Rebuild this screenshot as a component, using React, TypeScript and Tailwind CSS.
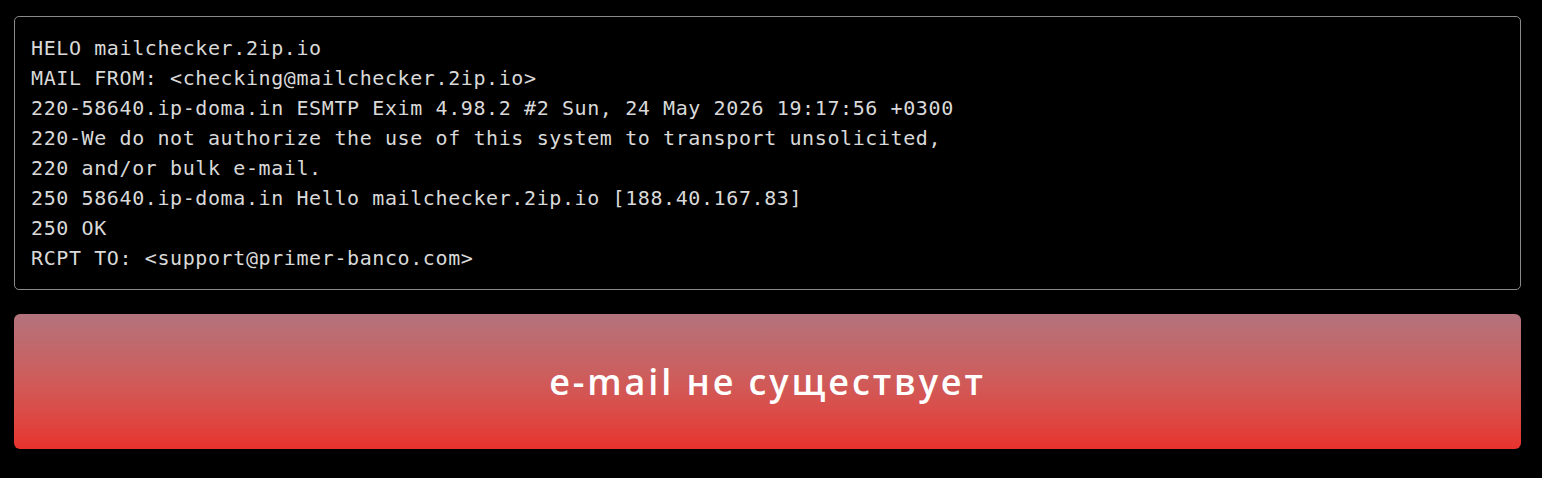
const lines = [
  "HELO mailchecker.2ip.io",
  "MAIL FROM: <checking@mailchecker.2ip.io>",
  "220-58640.ip-doma.in ESMTP Exim 4.98.2 #2 Sun, 24 May 2026 19:17:56 +0300",
  "220-We do not authorize the use of this system to transport unsolicited,",
  "220 and/or bulk e-mail.",
  "250 58640.ip-doma.in Hello mailchecker.2ip.io [188.40.167.83]",
  "250 OK",
  "RCPT TO: <support@primer-banco.com>",
];

export default function App() {
  return (
    <div className="min-h-[478px] w-full bg-black pl-[14px] pr-[21px] pt-4">
      {/* SMTP log */}
      <div className="rounded-[5px] border border-[#8a8a8a] bg-black px-4 py-4">
        {lines.map((line, i) => (
          <div
            key={i}
            className="whitespace-pre text-[20px] leading-[30px] tracking-[0.6px] text-[#d9d9d9]"
            style={{ fontFamily: '"DejaVu Sans Mono", monospace' }}
          >
            {line}
          </div>
        ))}
      </div>

      {/* Result */}
      <div className="mt-[24px] flex h-[135px] items-center justify-center rounded-[6px] bg-gradient-to-b from-[#b3737c] to-[#e8312c]">
        <span
          className="text-[36px] font-semibold tracking-[2.9px] text-white"
          style={{ fontFamily: '"Open Sans", sans-serif' }}
        >
          e-mail не существует
        </span>
      </div>
    </div>
  );
}
